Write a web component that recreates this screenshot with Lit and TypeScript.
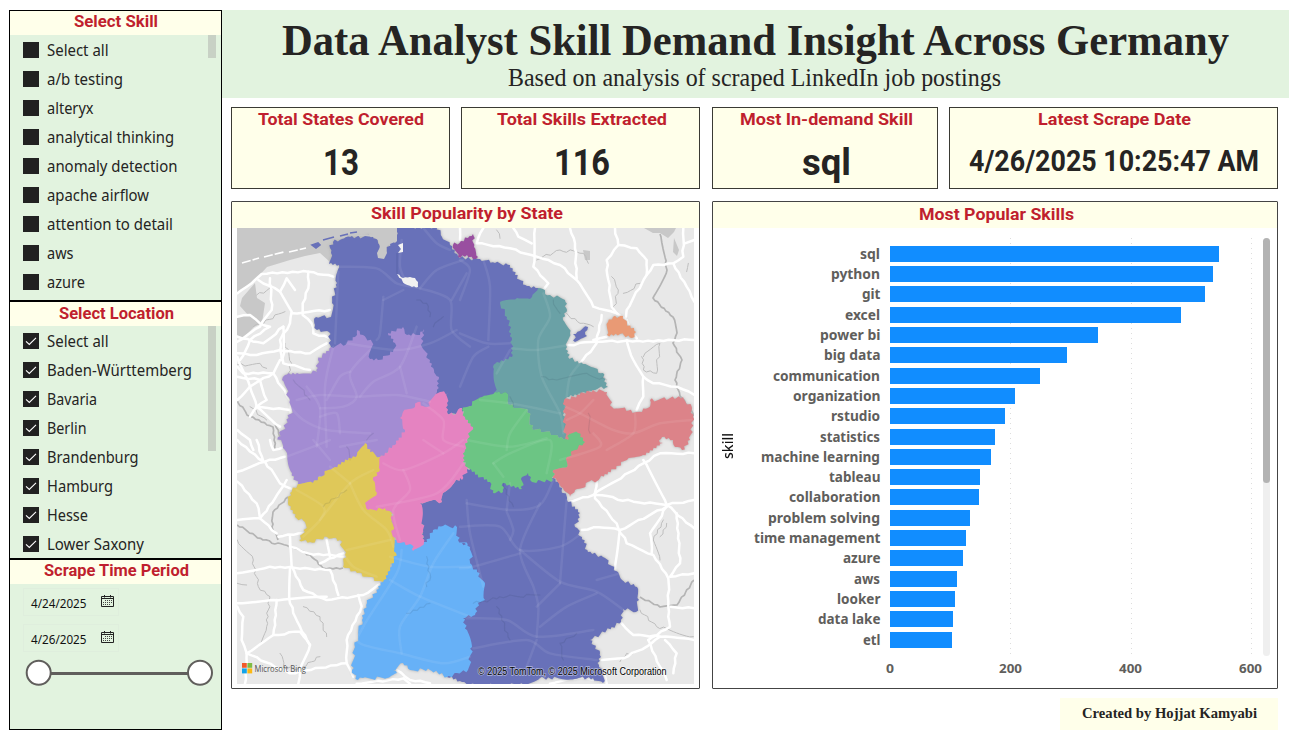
import { LitElement, html, svg, css } from "lit";
import { customElement } from "lit/decorators.js";

/** One line of text set to an exact advance width. */
const line = (
  text: string,
  width: number,
  size: number,
  height: number,
  baseline: number,
  cls: string
) => html`<svg class="line ${cls}" width=${width} height=${height}>
  <text x="0" y=${baseline} font-size=${size} textLength=${width} lengthAdjust="spacingAndGlyphs">${text}</text>
</svg>`;

const SKILLS: [string, number][] = [
  ["Select all", 61.5], ["a/b testing", 76], ["alteryx", 46.5], ["analytical thinking", 127],
  ["anomaly detection", 130.5], ["apache airflow", 102], ["attention to detail", 126], ["aws", 26.5], ["azure", 38],
];
const PLACES: [string, number][] = [
  ["Select all", 61.5], ["Baden-Württemberg", 145], ["Bavaria", 50], ["Berlin", 39.5],
  ["Brandenburg", 91.5], ["Hamburg", 66], ["Hesse", 41], ["Lower Saxony", 97],
];

/** label, label width, bar length */
const BARS: [string, number, number][] = [
  ["sql", 20, 330], ["python", 49, 324], ["git", 18.5, 316], ["excel", 35, 292], ["power bi", 60.5, 209],
  ["big data", 56.5, 178], ["communication", 107, 151], ["organization", 87.5, 126], ["rstudio", 49, 116],
  ["statistics", 60, 106], ["machine learning", 119, 102], ["tableau", 51.5, 91], ["collaboration", 91.5, 90],
  ["problem solving", 112, 81], ["time management", 126.5, 77], ["azure", 37.5, 74], ["aws", 26, 68],
  ["looker", 43.5, 66], ["data lake", 62.5, 64], ["etl", 17.5, 63],
];

/** Deterministic irregular path through the given points. */
function outline(points: string, amp = 1.9, step = 2, closed = true): string {
  const pts = points.trim().split(/\s+/).map((p) => p.split(",").map(Number));
  const rough = (a: number[], b: number[]): number[][] => {
    const flip = a[0] > b[0] || (a[0] === b[0] && a[1] > b[1]);
    const [p, q] = flip ? [b, a] : [a, b];
    const len = Math.hypot(q[0] - p[0], q[1] - p[1]);
    const n = Math.floor(len / step);
    const out: number[][] = [];
    for (let i = 1; i < n; i++) {
      const t = i / n;
      const h = Math.sin(p[0] * 12.9 + p[1] * 78.2 + q[0] * 3.7 + i * 37.7) * 43758.5;
      const d = (h - Math.floor(h) - 0.5) * 2 * amp;
      out.push([
        p[0] + (q[0] - p[0]) * t - ((q[1] - p[1]) / len) * d,
        p[1] + (q[1] - p[1]) * t + ((q[0] - p[0]) / len) * d,
      ]);
    }
    return flip ? out.reverse() : out;
  };
  const all: number[][] = [];
  pts.forEach((p, i) => {
    all.push(p);
    if (closed || i < pts.length - 1) all.push(...rough(p, pts[(i + 1) % pts.length]));
  });
  return "M" + all.map((p) => p.map((v) => v.toFixed(1)).join(",")).join("L") + (closed ? "Z" : "");
}

/** Soft curve through the given points. */
function curve(points: string): string {
  const p = points.trim().split(/\s+/).map((s) => s.split(",").map(Number));
  let d = `M${p[0]}`;
  for (let i = 0; i < p.length - 1; i++) {
    const a = p[i - 1] ?? p[i], b = p[i], c = p[i + 1], e = p[i + 2] ?? c;
    d += `C${b[0] + (c[0] - a[0]) / 7},${b[1] + (c[1] - a[1]) / 7} ${c[0] - (e[0] - b[0]) / 7},${c[1] - (e[1] - b[1]) / 7} ${c}`;
  }
  return d;
}

const STATES: [string, string][] = [
  ["#6871b9", "329,264 331,253 330,248 333,242 342,239 350,237 373,236 380,245 378,252 386,252 390,243 397,241 397,227 437,227 442,237 450,245 458,256 470,259 480,259 495,263 510,265 515,275 527,286 538,288 545,330 530,400 482,400 462,412 450,414 430,400 380,380 335,360 331,347 329,332 317,330 315,325 316,317 331,317 332,303 337,283 339,265"],
  ["#6871b9", "420,503 433,500 442,502 443,493 460,478 467,469 500,465 553,478 562,488 567,500 580,513 575,527 582,537 588,552 603,557 618,572 622,580 637,587 639,600 636,612 623,609 621,622 590,640 600,653 599,667 604,672 603,683 593,678 540,678 527,685 487,685 470,685 462,682 447,677 455,600 423,541"],
  ["#67b1f7", "394,540 402,535 413,530 424,542 427,542 433,530 443,526 457,527 458,540 468,545 462,543 470,547 472,565 477,572 485,583 485,600 478,603 475,615 463,618 467,630 472,647 468,670 457,673 447,677 430,670 410,670 403,663 393,670 397,673 387,678 363,678 358,680 352,670 355,647 362,620 367,603 383,582 390,568"],
  ["#a38cd3", "331,347 347,343 355,337 357,330 363,335 372,342 370,359 378,360 393,352 395,343 388,333 403,327 407,335 417,335 424,329 422,347 430,360 434,370 439,377 437,392 440,410 410,440 393,450 380,458 365,460 318,477 313,483 298,484 292,473 287,453 283,448 278,437 283,430 292,410 290,400 282,380 285,375 297,373 317,372 318,360"],
  ["#dfc859", "365,443 357,455 333,468 318,477 313,483 298,484 290,493 288,503 295,517 305,522 305,532 299,540 310,542 327,537 340,540 345,555 343,567 357,573 383,582 390,568 396,553 394,537 392,513 382,500 384,480 380,457 370,452"],
  ["#e583c1", "400,418 403,412 415,407 418,402 427,407 438,393 448,393 447,403 447,412 453,415 460,408 462,408 465,417 473,427 467,440 465,450 463,462 467,470 462,480 460,478 443,493 442,502 433,500 420,503 423,530 424,542 413,551 412,545 400,543 393,537 392,513 385,508 368,510 365,503 377,493 373,480 380,470 380,457 395,445 405,430"],
  ["#6aa1a6", "538,288 550,295 565,300 567,310 563,320 570,333 567,347 568,357 583,364 603,373 608,387 593,390 567,397 564,413 568,440 555,435 532,428 528,410 510,405 507,393 495,392 493,367 497,362 512,357 512,340 507,317 500,302 517,298 532,297"],
  ["#dc8389", "564,400 593,390 607,392 612,407 637,412 648,408 650,400 683,397 692,408 693,417 690,440 682,450 675,447 673,440 662,437 657,447 663,443 643,455 627,460 600,478 575,490 570,497 563,488 553,478 553,470 567,467 565,440"],
  ["#6cc584", "462,410 482,397 495,392 507,393 510,405 528,410 532,428 555,435 568,440 568,432 578,433 585,442 575,450 567,457 567,467 553,470 553,480 532,482 528,473 522,477 522,489 503,483 503,492 493,493 490,482 472,472 463,462 465,450 467,440 473,427 465,417"],
  ["#e99a75", "608,322 613,317 623,316 627,323 636,332 632,338 620,334 607,335"],
  ["#6871b9", "573,334 580,331 588,327 585,332 587,336 575,342"],
  ["#994fa0", "453,245 461,241 468,238 473,234 474,247 478,257 473,259 467,255 458,257"],
];

/** Road strokes, one list per map quadrant; quadrant units are thirds of a pixel. */
const OUTER: Record<string, string> = {
  nw: "22,280 75,240 95,222 235,215 310,230|85,240 150,275 185,335 180,370 150,420 155,480|150,275 170,235 195,270|235,215 235,265 218,310 218,345 245,370 250,400 300,415|185,340 300,330|120,235 125,330 90,380 22,425|22,460 80,465 150,450 240,460 290,430|22,470 60,560 80,620 60,650|22,350 60,345 90,370 120,380 60,420 30,480|150,480 130,520 180,600 182,640|160,380 160,490 240,510|130,520 60,560 22,600|22,410 100,430 160,380|22,530 90,540 110,600 80,620 180,630|80,620 150,680|22,690 60,720 70,750|22,500 40,520 130,520",
  sw: "22,95 105,65 165,50|105,65 150,130 200,150|22,0 100,65 80,0|22,125 80,190 90,235 140,280|22,240 90,235 135,175 170,120|180,310 185,380 220,450 290,480 400,465 455,430|22,400 120,380 300,390 320,450 325,465|22,490 130,480 290,470|22,500 40,530 35,600 50,640 130,585 210,575 240,615 210,690 205,731|140,480 130,585|180,385 180,490 210,560 240,615|50,640 45,731|50,640 180,700 350,670|385,465 395,500 350,600 350,670 370,710|180,290 180,320 235,340 340,350|290,300 300,350|270,370 340,340|120,0 130,30 165,20|145,290 220,280|500,690 540,720 600,730|380,731 520,715 540,731",
  ne: "70,84 50,130 150,145 230,170 300,195 350,240 400,320 470,340 500,360 530,415|330,84 345,130 350,235|225,84 220,200 265,250 250,270|160,84 175,110 215,130|465,84 475,135 440,180 445,240 455,320 470,340|475,135 530,145 560,180 560,225 500,330 498,350|560,225 580,195 640,190 670,170 670,84|640,190 680,260 703,305|675,130 703,120|325,435 410,425 703,420|410,425 425,345|410,430 360,490|500,420 520,480 550,530 550,590 530,630|550,530 580,550 650,560 703,585|440,410 400,420|0,84 0,120",
  se: "325,185 400,165 550,70 600,40 703,40|550,60 620,195 703,265|410,165 520,185 620,195 703,180|410,120 405,175 470,250 500,310 580,345 625,415 625,500 630,560 565,600|365,270 400,262 480,270 620,200|480,270 465,390|620,200 570,280 575,340|650,220 660,370 630,410 703,400|485,550 520,585 600,590 703,600|632,500 703,505|600,590 560,620 490,655 425,660|565,600 600,680 620,720|615,600 650,640 640,700|270,731 360,712 400,720|440,731 430,690",
};
const INNER: Record<string, string> = {
  nw: "325,200 440,205 500,250 570,265 660,300 665,390 720,440|325,215 315,430|460,290 450,400 440,420|460,300 520,270|570,265 620,210 700,180|515,120 510,200 530,250|665,300 710,220|580,84 620,130 660,150|310,440 285,560 290,740|200,600 270,585 380,590 500,585 600,605|420,450 360,520 380,590 340,620 270,625|390,590 430,545 510,500 560,380|510,500 530,580|180,620 220,660 290,690 420,700|230,560 270,625 260,740|330,740 440,720|290,600 330,530 360,515|270,650 320,640 330,700|580,610 640,660 640,720 700,740|350,430 500,450 600,430 680,390",
  ne: "0,400 80,430 150,430|70,180 90,260 85,420|0,560 40,470 85,440|0,180 30,210 0,300|155,445 230,450 325,435|250,280 270,350 235,420 245,530 300,640 310,700|320,590 330,530 360,490|110,520 150,450|60,600 150,610 300,640|200,630 150,700 140,750|20,720 150,740 260,715|315,620 360,640 460,690 520,700 600,670 695,660|525,640 520,700 440,750|320,660 360,640 400,600",
  sw: "200,150 280,200 270,240 220,290|270,240 360,130 430,90|360,130 400,210 470,270 490,320|350,330 480,300|300,80 360,130|340,340 370,380 440,410|460,70 520,90 640,40 700,0|520,90 540,150 490,210 510,300|440,200 620,160 700,70|250,0 300,60|170,50 250,20 300,0|640,40 580,0|515,330 500,400 400,560 390,610 510,640 640,670 720,650|480,350 600,380 720,380|670,280 610,370 570,470 510,560 515,640|480,420 570,470 720,530",
  se: "20,190 150,210 240,195 280,120|140,215 160,270 150,300|20,180 30,280 70,440|0,260 120,260 180,330 300,320 365,280|240,190 180,330 220,440 235,500 230,590|300,430 320,180|180,330 300,425 410,455 490,510|0,385 40,380 180,340|20,535 140,540 230,590 400,570|40,625 200,600 270,640 410,660|300,430 230,500|410,460 320,500 240,560|230,600 200,680|140,210 150,130|100,70 150,40 270,0 260,100|100,70 130,110|410,420 480,400|300,60 420,20 400,-20",
};
const DETAIL: Record<string, string> = {
  nw: "80,285 130,265|70,380 165,335|165,430 185,490 170,540|22,495 90,490 110,505|185,580 180,590|110,660 60,620",
  sw: "22,300 70,360 85,440 120,470 110,560 85,620|220,500 270,530 290,590|150,640 160,680 200,690 270,650|22,430 50,435",
  ne: "230,180 300,150 370,160 385,190|455,230 475,270 460,330|490,280 540,250|110,90 120,115|550,470 600,430 590,520 550,510 545,470|320,340 360,370 400,380|685,190 680,215",
  se: "610,240 580,300 600,360|620,250 600,290|480,665 500,640 520,640|540,510 590,560 700,590",
};
const RIVERS: Record<string, string> = {
  nw: "560,300 590,310 600,350|610,380 640,350|190,540 240,600|430,700 410,720",
  ne: "245,530 290,540 380,520 440,540|385,640 390,700|280,300 300,340|150,590 160,620",
  sw: "590,350 600,400 590,440|530,520 600,490|280,200 350,150|350,20 360,60",
  se: "40,490 140,470 240,465|110,500 150,600|310,660 300,610 350,580|130,130 160,200",
};
const TILES: [string, string][] = [
  ["nw", "translate(230 200) scale(.33333)"], ["ne", "translate(460 200) scale(.33333)"],
  ["sw", "translate(230 440) scale(.33333)"], ["se", "translate(460 440) scale(.33333)"],
];
const strokes = (set: Record<string, string>, cls: string, path: (p: string) => string) =>
  TILES.map(([k, t]) => svg`<g class=${cls} transform=${t}>${set[k].split("|").map((p) => svg`<path d=${path(p)} />`)}</g>`);
const wavy = (p: string) => outline(p, 5, 10, false);
const road = (p: string) => outline(p, 2.8, 15, false);
const BORDERS = [
  "660,234 667,270 653,298 673,317 677,333 673,343 682,360 675,380 680,396 690,408 694,416",
  "237,525 263,540 290,547 310,555 323,568 343,568", "288,497 273,512 272,527 278,540",
  "237,400 247,415 273,427 275,450", "640,597 660,607 677,605 694,580", "275,424 280,437",
];

@customElement("state-map")
export class StateMap extends LitElement {
  static styles = css`
    :host { display: block; height: 456px; }
    svg { display: block; }
    .road, .inner, .detail, .river { fill: none; stroke-linejoin: round; stroke-linecap: round; }
    .road { stroke: #fff; stroke-width: 7.5; }
    .inner { stroke: #fff; stroke-opacity: 0.075; stroke-width: 7.5; }
    .river { stroke: #203040; stroke-opacity: 0.1; stroke-width: 3.5; }
    .detail { stroke: #bebebe; stroke-width: 3; }
    .edge { fill: none; stroke: #b4b4b4; stroke-width: 1.7; stroke-linejoin: round; }
    .sea { fill: #c8c8c8; }
    .shade { filter: drop-shadow(0 0 1.5px #aaa); }
    .brand { font: 9.5px "Open Sans", sans-serif; fill: #555; }
    .copy { font: 10px "Liberation Sans", sans-serif; fill: #000; stroke: #fff; stroke-opacity: .5; stroke-width: 1.3px; paint-order: stroke; }
  `;
  render() {
    return html`<svg width="457" height="456" viewBox="237 228 457 456">
      <rect x="237" y="228" width="457" height="456" fill="#e8e8e8" />
      <path class="sea" d="M237,228H398V240L390,243 386,259 378,258 376,252 340,240 330,262 320,253 305,256 290,260 267,267 255,280 237,293Z" />
      <path class="sea" d="M255,283 257,298 265,303 262,323 254,327 243,338 237,335V317L248,315 240,306 242,298Z" />
      <path class="sea" d="M644,228 653,233 660,233 668,238 674,232 676,228ZM674,238 679,250 677,256 673,252ZM583,250 590,251 590,260 585,260Z" />
      <path d="M242,263 259,258M264,257 284,252M289,252 306,248" stroke="#fff" stroke-width="1.6" stroke-dasharray="9 2" fill="none" />
      ${strokes(DETAIL, "detail", wavy)}
      ${BORDERS.map((b) => svg`<path class="edge" d=${outline(b, 0.9, 3, false)} />`)}
      ${strokes(OUTER, "road", road)}
      <g class="shade">${STATES.map(([c, p]) => svg`<path d=${outline(p)} fill=${c} />`)}</g>
      <path d="M312,245l6,-2 2,2-4,3zM323,240l11,-3M340,236l8,-2M350,233l7,-1" stroke="#6871b9" stroke-width="1.6" fill="#6871b9" />
      <path class="sea" d="M373,228H397L397,241 390,244 386,247 387,253 384,259 378,258 377,253 380,247 378,240 373,237 365,236 350,236 342,238 334,240 345,236 373,234z" />
      <path d=${outline("397,274 403,278 410,277 415,278 418,282 418,287 412,287 405,284", 0.8)} fill="#f1f1f1" />
      <path d="M398,245l5,-2 0,9 -5,1 3,-4z" fill="#f4f4f4" />
      <path d="M397,253V274" stroke="#5964a8" stroke-width="1" />
      ${strokes(RIVERS, "river", wavy)}
      ${strokes(INNER, "inner", curve)}
      <path d="M242,663h4.800v4.800h-4.800z" fill="#f1592a" /><path d="M247.400,663h4.800v4.800h-4.800z" fill="#80bc42" />
      <path d="M242,668.400h4.800v5h-4.800z" fill="#12a4e9" /><path d="M247.400,668.400h4.800v5h-4.800z" fill="#fcb813" />
      <text class="brand" x="254.500" y="672" textLength="51.500" lengthAdjust="spacingAndGlyphs">Microsoft Bing</text>
      <text class="copy" x="478" y="674.500" textLength="188.500" lengthAdjust="spacingAndGlyphs">© 2025 TomTom, © 2025 Microsoft Corporation</text>
    </svg>`;
  }
}

@customElement("app-root")
export class AppRoot extends LitElement {
  static styles = css`
    :host {
      display: grid; grid-template-columns: 213px 1fr; width: 1295px; height: 740px; box-sizing: border-box;
      padding: 10px 6px 10px 9px; background: #fff; overflow: hidden; color: #252423;
      font-family: "Noto Sans", "Open Sans", sans-serif;
    }
    * { box-sizing: border-box; }
    .line { display: block; overflow: visible; flex: none; }
    .line text { fill: currentColor; }
    .ttl { color: #c01f2e; font-family: Roboto, sans-serif; font-weight: 700; margin: 0 auto; }
    .num { font-family: Roboto, sans-serif; font-weight: 700; margin: 0 auto; }
    .side { display: grid; grid-template-rows: 291px 258px 171px; }
    .panel { border: 1px solid #000; background: #e2f3df; overflow: hidden; display: flex; flex-direction: column; }
    .strip { background: #ffffea; height: 24px; flex: none; padding-left: 1px; }
    .list { display: grid; grid-template-columns: 1fr 8px; flex: 1; padding-right: 5px; min-height: 0; }
    .rows { padding-left: 13px; overflow: hidden; }
    .row { height: 29px; display: flex; align-items: center; gap: 8px; }
    .box { width: 16px; height: 16px; background: #212121; display: block; }
    .box path { fill: none; stroke: #fff; stroke-width: 1.1; }
    .thumb { background: #c8d1c5; width: 8px; }
    .short { height: 23px; }
    .tall { height: 125px; }
    .dates { padding: 4px 0 0 13px; display: flex; flex-direction: column; gap: 8px; color: #111; }
    .date { width: 96px; height: 28px; border: 1px solid #dfeedd; display: flex; align-items: flex-start; padding: 6px 4px 0 7px; justify-content: space-between; }
    .slider { display: block; margin: 6px 0 0 12px; }
    .main { display: flex; flex-direction: column; }
    .head { background: #e2f3df; height: 88px; color: #252423; font-family: "Liberation Serif", serif; }
    .head .line { margin: 0 auto; }
    .head .h1 { font-weight: 700; }
    .head .h2 { margin-left: 286px; }
    .body { padding: 9px 11px 0 9px; display: flex; flex-direction: column; }
    .cards { display: grid; grid-template-columns: 219px 239px 227px 329px; column-gap: 11px; height: 82px; }
    .cards > :nth-child(2), .cards > :nth-child(3) { padding-left: 3px; }
    .cards > :nth-child(3) { margin-left: 1px; }
    .card { background: #ffffea; border: 1px solid #3a3a34; padding-left: 1px; }
    .visuals { display: grid; grid-template-columns: 469px 566px; column-gap: 12px; margin-top: 12px; height: 488px; }
    .visual { border: 1px solid #444; border-radius: 1px; background: #fff; }
    .visual .strip { height: 26px; padding-left: 3px; }
    .visual state-map { margin: 0 5px; }
    .chart { display: grid; grid-template-columns: 29px 138px 9.5px 373.5px 7px; height: 459px; }
    .axis { display: flex; align-items: center; justify-content: center; writing-mode: vertical-rl; transform: rotate(180deg); font: 500 14px "Noto Sans", sans-serif; padding-top: 22px; color: #111; }
    .names, .bars { padding-top: 15.4px; display: grid; grid-template-rows: repeat(20, 20.33px); align-content: start; align-items: center; }
    .names { justify-items: end; color: #605e5c; font-weight: 700; }
    .plot { display: grid; grid-template-rows: 427px 20px; }
    .bars { background: repeating-linear-gradient(#ddd 0 1px, transparent 1px 5px) 120px 10px / 1px 418px no-repeat,
      repeating-linear-gradient(#ddd 0 1px, transparent 1px 5px) 241px 10px / 1px 418px no-repeat,
      repeating-linear-gradient(#ddd 0 1px, transparent 1px 5px) 361px 10px / 1px 418px no-repeat; }
    .bar { height: 16px; background: #118dff; }
    .ticks { display: grid; grid-template-columns: repeat(4, 120.4px); margin-left: -60px; justify-items: center; color: #605e5c; font-weight: 700; width: 482px; }
    .track { background: #efefef; border-radius: 4px; height: 418px; margin-top: 10px; }
    .grip { background: #b3b3b3; border-radius: 4px; height: 245px; }
    .foot { background: #ffffea; width: 218px; height: 32px; margin: 9px 0 0 auto; font-family: "Liberation Serif", serif; font-weight: 700; }
    .foot .line { margin: 0 auto 0 21.5px; }
  `;

  private rows(items: [string, number][], checked: boolean) {
    return html`<div class="rows">${items.map(([t, w]) => html`<div class="row">
      <svg class="box" viewBox="0 0 16 16">${checked ? svg`<path d="M3 8.300 6.300 11.500 13 4.800" />` : ""}</svg>
      ${line(t, w, 15.6, 20, 16, "")}</div>`)}</div>`;
  }

  private date(text: string) {
    return html`<div class="date">${line(text, 55.5, 12.2, 14, 13, "")}
      <svg width="13" height="13" viewBox="0 0 13 13" fill="none" stroke="#222">
        <path d="M.5 1.500h12v10H.5zM.5 3.500h12M3.500 0v2.500M9.500 0v2.500" />
        <path d="M4 5.500h7M2 7.500h9M2 9.500h7" stroke-dasharray="1 1" stroke="#444" />
      </svg></div>`;
  }

  render() {
    return html`
      <aside class="side">
        <section class="panel">
          <div class="strip">${line("Select Skill", 84, 16.4, 24, 16.4, "ttl")}</div>
          <div class="list">${this.rows(SKILLS, false)}<div class="thumb short"></div></div>
        </section>
        <section class="panel">
          <div class="strip">${line("Select Location", 115, 16.4, 24, 16.6, "ttl")}</div>
          <div class="list">${this.rows(PLACES, true)}<div class="thumb tall"></div></div>
        </section>
        <section class="panel">
          <div class="strip">${line("Scrape Time Period", 145, 16.4, 24, 16.4, "ttl")}</div>
          <div class="dates">${this.date("4/24/2025")}${this.date("4/26/2025")}</div>
          <svg class="slider" width="194" height="30">
            <path d="M16.700 15.500H178" stroke="#605e5c" stroke-width="3" />
            <g fill="#fff" stroke="#605e5c" stroke-width="2"><circle cx="16.700" cy="14.700" r="12" /><circle cx="178" cy="14.700" r="12" /></g>
          </svg>
        </section>
      </aside>
      <main class="main">
        <header class="head">
          ${line("Data Analyst Skill Demand Insight Across Germany", 947, 43.4, 50, 45, "h1")}
          ${line("Based on analysis of scraped LinkedIn job postings", 493, 24.5, 30, 26, "h2")}
        </header>
        <div class="body">
          <div class="cards">
            <div class="card">${line("Total States Covered", 166, 16.4, 24, 17, "ttl")}${line("13", 36, 36, 50, 42.500, "num")}</div>
            <div class="card">${line("Total Skills Extracted", 170, 16.4, 24, 17, "ttl")}${line("116", 56, 36, 50, 42.500, "num")}</div>
            <div class="card">${line("Most In-demand Skill", 173, 16.4, 24, 17, "ttl")}${line("sql", 49, 36, 50, 42.500, "num")}</div>
            <div class="card">${line("Latest Scrape Date", 153, 16.4, 24, 17, "ttl")}${line("4/26/2025 10:25:47 AM", 290, 29, 50, 39, "num")}</div>
          </div>
          <div class="visuals">
            <section class="visual">
              <div class="strip">${line("Skill Popularity by State", 192, 16.4, 24, 17.4, "ttl")}</div>
              <state-map></state-map>
            </section>
            <section class="visual">
              <div class="strip">${line("Most Popular Skills", 155, 16.4, 24, 18, "ttl")}</div>
              <div class="chart">
                <div class="axis">skill</div>
                <div class="names">${BARS.map(([t, w]) => line(t, w, 14, 20, 15, ""))}</div>
                <span></span>
                <div class="plot">
                  <div class="bars">${BARS.map(([, , v]) => html`<div class="bar" style="width:${v - 0.5}px"></div>`)}</div>
                  <div class="ticks">${line("0", 8, 12.6, 20, 17.5, "")}${line("200", 23, 12.6, 20, 17.5, "")}${line("400", 23, 12.6, 20, 17.5, "")}${line("600", 23, 12.6, 20, 17.5, "")}</div>
                </div>
                <div class="track"><div class="grip"></div></div>
              </div>
            </section>
          </div>
          <footer class="foot">${line("Created by Hojjat Kamyabi", 175, 15, 32, 20, "")}</footer>
        </div>
      </main>`;
  }
}
